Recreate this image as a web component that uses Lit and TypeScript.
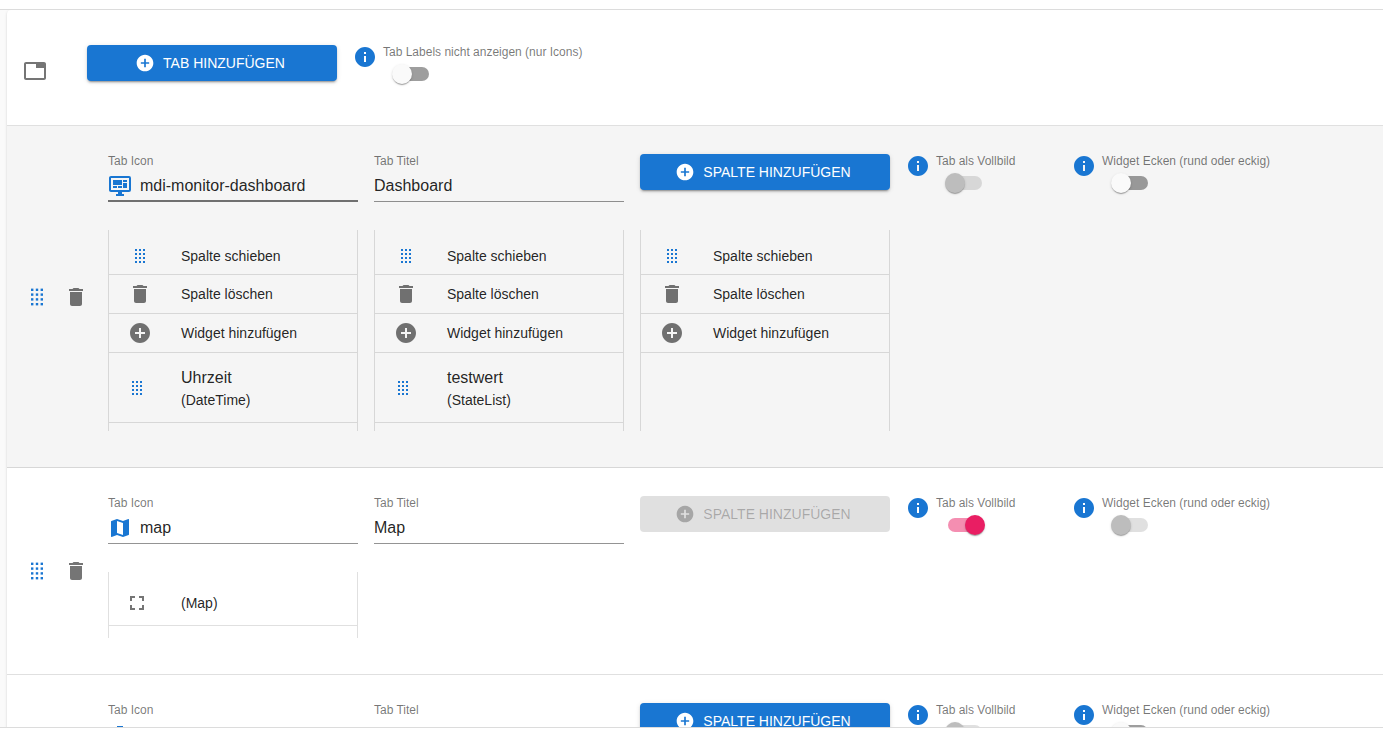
import { LitElement, html, svg, css, nothing } from "lit";
import { customElement, property } from "lit/decorators.js";
import { classMap } from "lit/directives/class-map.js";

const dots = [3.6, 8.4, 13.2, 18].flatMap((y) => [6, 10.8, 15.6].map((x) => ({ x, y })));

const paths: Record<string, string> = {
  tab: "M21 3H3c-1.1 0-2 .9-2 2v14c0 1.1.9 2 2 2h18c1.1 0 2-.9 2-2V5c0-1.1-.9-2-2-2zm0 16H3V5h10v4h8v10z",
  add: "M12 2C6.48 2 2 6.48 2 12s4.48 10 10 10 10-4.48 10-10S17.52 2 12 2zm5 11h-4v4h-2v-4H7v-2h4V7h2v4h4v2z",
  info: "M12 2C6.48 2 2 6.48 2 12s4.48 10 10 10 10-4.48 10-10S17.52 2 12 2zm1 15h-2v-6h2v6zm0-8h-2V7h2v2z",
  trash: "M6 19c0 1.1.9 2 2 2h8c1.1 0 2-.9 2-2V7H6v12zM19 4h-3.5l-1-1h-5l-1 1H5v2h14V4z",
  fullscreen: "M7 14H5v5h5v-2H7v-3zm-2-4h2V7h3V5H5v5zm12 7h-3v2h5v-5h-2v3zM14 5v2h3v3h2V5h-5z",
  monitor:
    "M21 16V4H3v12h18M21 2a2 2 0 0 1 2 2v12a2 2 0 0 1-2 2h-7v2h2v2H8v-2h2v-2H3c-1.11 0-2-.9-2-2V4c0-1.11.89-2 2-2h18M5 6h9v5H5V6m10 0h4v2h-4V6m4 3v5h-4V9h4M5 12h4v2H5v-2m5 0h4v2h-4v-2z",
  map: "M20.5 3l-.16.03L15 5.1 9 3 3.36 4.9c-.21.07-.36.25-.36.48V20.5c0 .28.22.5.5.5l.16-.03L9 18.9l6 2.1 5.64-1.9c.21-.07.36-.25.36-.48V3.5c0-.28-.22-.5-.5-.5zM15 19l-6-2.11V5l6 2.11V19z",
  box: "M9 3h6v3h5v15H4V6h5z",
};

const icon = (name: string, size = 24) => html`<svg
  width=${size}
  height=${size}
  viewBox="0 0 24 24"
  fill="currentColor"
  aria-hidden="true"
>
  ${name === "drag"
    ? dots.map((d) => svg`<rect x=${d.x} y=${d.y} width="2.4" height="2.4" />`)
    : svg`<path d=${paths[name]} />`}
</svg>`;

const base = css`
  * {
    box-sizing: border-box;
  }
  svg {
    display: block;
    flex: none;
  }
  button,
  input {
    font: inherit;
    color: inherit;
    margin: 0;
    padding: 0;
    border: 0;
    background: none;
  }
`;

@customElement("add-button")
export class AddButton extends LitElement {
  @property() label = "";
  @property({ type: Boolean }) disabled = false;

  static styles = [
    base,
    css`
      :host {
        display: block;
      }
      .button {
        display: flex;
        align-items: center;
        justify-content: center;
        gap: 8px;
        width: 100%;
        height: 36px;
        padding: 0 20px 0 16px;
        border-radius: 4px;
        background: #1976d2;
        color: #fff;
        font-size: 14px;
        line-height: 24px;
        text-transform: uppercase;
        cursor: pointer;
        box-shadow: 0 3px 1px -2px rgba(0, 0, 0, 0.2), 0 2px 2px rgba(0, 0, 0, 0.14),
          0 1px 5px rgba(0, 0, 0, 0.12);
      }
      .button:disabled {
        background: rgba(0, 0, 0, 0.12);
        color: rgba(0, 0, 0, 0.26);
        box-shadow: none;
        cursor: default;
      }
    `,
  ];

  render() {
    return html`<button class="button" ?disabled=${this.disabled}>
      ${icon("add", 20)}<span>${this.label}</span>
    </button>`;
  }
}

@customElement("info-switch")
export class InfoSwitch extends LitElement {
  @property() label = "";
  @property({ type: Boolean }) checked = false;
  @property({ type: Boolean }) disabled = false;

  static styles = [
    base,
    css`
      :host {
        display: flex;
        gap: 6px;
        white-space: nowrap;
      }
      .info {
        color: #1976d2;
      }
      .label {
        display: block;
        font-size: 12px;
        line-height: 14px;
        color: rgba(0, 0, 0, 0.54);
      }
      .switch {
        appearance: none;
        display: grid;
        align-items: center;
        width: 58px;
        height: 30px;
        padding: 0 9px;
        cursor: pointer;
      }
      .switch::before,
      .switch::after {
        content: "";
        grid-area: 1 / 1;
      }
      .switch::before {
        width: 34px;
        height: 14px;
        margin-left: 3px;
        border-radius: 7px;
        background: #000;
        opacity: 0.38;
      }
      .switch::after {
        width: 20px;
        height: 20px;
        border-radius: 50%;
        background: #fafafa;
        z-index: 1;
        box-shadow: 0 2px 1px -1px rgba(0, 0, 0, 0.2), 0 1px 1px rgba(0, 0, 0, 0.14),
          0 1px 3px rgba(0, 0, 0, 0.12);
      }
      .switch:checked::before {
        background: #e91e63;
        opacity: 0.5;
      }
      .switch:checked::after {
        background: #e91e63;
        justify-self: end;
      }
      .switch:disabled {
        cursor: default;
      }
      .switch:disabled::before {
        opacity: 0.12;
      }
      .switch:disabled::after {
        background: #bdbdbd;
      }
    `,
  ];

  render() {
    return html`<span class="info">${icon("info")}</span>
      <div>
        <label class="label" for="toggle">${this.label}</label>
        <input
          class="switch"
          id="toggle"
          type="checkbox"
          .checked=${this.checked}
          ?disabled=${this.disabled}
        />
      </div>`;
  }
}

@customElement("text-field")
export class TextField extends LitElement {
  @property() label = "";
  @property() value = "";
  @property() icon = "";
  @property({ type: Boolean }) active = false;

  static styles = [
    base,
    css`
      :host {
        display: block;
      }
      .label {
        display: block;
        height: 16px;
        font-size: 12px;
        line-height: 14px;
        color: rgba(0, 0, 0, 0.54);
      }
      .control {
        display: flex;
        align-items: flex-start;
        gap: 8px;
        height: 32px;
        border-bottom: 1px solid rgba(0, 0, 0, 0.42);
      }
      .active {
        border-bottom: 2px solid rgba(0, 0, 0, 0.54);
      }
      .icon {
        padding-top: 4px;
        color: #1976d2;
      }
      .input {
        flex: 1;
        min-width: 0;
        height: 30px;
        padding-top: 2px;
        font-size: 16px;
        outline: none;
      }
    `,
  ];

  render() {
    return html`<label class="label" for="field">${this.label}</label>
      <div class=${classMap({ control: true, active: this.active })}>
        ${this.icon ? html`<span class="icon">${icon(this.icon)}</span>` : nothing}
        <input class="input" id="field" type="text" .value=${this.value} />
      </div>`;
  }
}

interface Widget {
  icon: string;
  title?: string;
  type: string;
}

@customElement("widget-column")
export class WidgetColumn extends LitElement {
  @property({ attribute: false }) widgets: Widget[] = [];
  @property({ type: Boolean }) actions = false;

  static styles = [
    base,
    css`
      :host {
        display: block;
      }
      .list {
        height: 100%;
        min-height: 66px;
        margin: 0;
        padding: 8px 0;
        list-style: none;
        border: solid rgba(0, 0, 0, 0.12);
        border-width: 0 1px;
        font-size: 14px;
        line-height: 20px;
      }
      .item {
        display: flex;
        align-items: center;
        min-height: 39px;
        padding: 0 16px;
        border-bottom: 1px solid rgba(0, 0, 0, 0.12);
      }
      .first {
        min-height: 37px;
      }
      .widget {
        min-height: 46px;
      }
      .titled {
        min-height: 70px;
      }
      .lead {
        flex: none;
        display: flex;
        width: 56px;
        color: rgba(0, 0, 0, 0.54);
      }
      .lead.drag {
        padding: 0 2px;
        color: #1976d2;
        cursor: grab;
      }
      .action {
        padding: 0 3px;
      }
      .action.drag {
        padding: 0 5px;
      }
      .title {
        font-size: 16px;
        line-height: 24px;
      }
      .type {
        font-size: 14px;
      }
    `,
  ];

  render() {
    return html`<ul class="list">
      ${this.actions
        ? html`<li class="item first">
              <span class="lead drag action">${icon("drag", 20)}</span>Spalte schieben
            </li>
            <li class="item">
              <span class="lead action"
                ><button aria-label="Spalte löschen">${icon("trash")}</button></span
              >Spalte löschen
            </li>
            <li class="item">
              <span class="lead action"
                ><button aria-label="Widget hinzufügen">${icon("add")}</button></span
              >Widget hinzufügen
            </li>`
        : nothing}
      ${this.widgets.map(
        (w) => html`<li class=${classMap({ item: true, widget: true, titled: !!w.title })}>
          <span class=${classMap({ lead: true, drag: w.icon === "drag" })}
            >${icon(w.icon, w.icon === "drag" ? 20 : 24)}</span
          >
          <div>
            ${w.title ? html`<div class="title">${w.title}</div>` : nothing}
            <div class="type">${w.type}</div>
          </div>
        </li>`
      )}
    </ul>`;
  }
}

interface Tab {
  icon: string;
  iconName: string;
  title: string;
  hovered?: boolean;
  full?: boolean;
  fullDisabled?: boolean;
  columns: Widget[][];
}

const tabs: Tab[] = [
  {
    icon: "monitor",
    iconName: "mdi-monitor-dashboard",
    title: "Dashboard",
    hovered: true,
    fullDisabled: true,
    columns: [
      [{ icon: "drag", title: "Uhrzeit", type: "(DateTime)" }],
      [{ icon: "drag", title: "testwert", type: "(StateList)" }],
      [],
    ],
  },
  {
    icon: "map",
    iconName: "map",
    title: "Map",
    full: true,
    columns: [[{ icon: "fullscreen", type: "(Map)" }]],
  },
  { icon: "box", iconName: "", title: "", fullDisabled: true, columns: [[]] },
];

@customElement("app-root")
export class AppRoot extends LitElement {
  static styles = [
    base,
    css`
      :host {
        display: flex;
        flex-direction: column;
        height: 100vh;
        background: #fff;
        color: rgba(0, 0, 0, 0.87);
        font-family: "Liberation Sans", Arial, sans-serif;
        font-size: 14px;
      }
      .top {
        flex: none;
        height: 10px;
        border-bottom: 1px solid #dcdcdc;
      }
      .bottom {
        flex: none;
        height: 12px;
        border-top: 1px solid #dcdcdc;
      }
      .main {
        flex: 1;
        min-height: 0;
        overflow: hidden;
        padding-left: 7px;
        background: #fafafa;
      }
      .panel {
        min-height: 100%;
        background: #fff;
        border-top-left-radius: 4px;
        box-shadow: 0 2px 1px -1px rgba(0, 0, 0, 0.2), 0 1px 1px rgba(0, 0, 0, 0.14),
          0 1px 3px rgba(0, 0, 0, 0.12);
      }
      .row {
        display: flex;
        border-bottom: 1px solid rgba(0, 0, 0, 0.12);
      }
      .head {
        padding: 35px 0 36px;
      }
      .tab {
        padding: 28px 0 36px;
      }
      .hovered {
        background: #f5f5f5;
      }
      .lead {
        flex: none;
        display: flex;
        align-items: center;
        padding-top: 8px;
        color: rgba(0, 0, 0, 0.54);
      }
      .head .lead {
        width: 80px;
        padding-left: 16px;
      }
      .tab .lead {
        width: 101px;
        gap: 15px;
        padding-left: 18px;
      }
      .drag {
        color: #1976d2;
        cursor: grab;
      }
      .grid {
        flex: 1;
        display: grid;
        grid-template-columns: repeat(3, 250px) 150px 1fr;
        gap: 28px 16px;
      }
      .first-col {
        grid-column-start: 1;
      }
    `,
  ];

  render() {
    return html`<div class="top"></div>
      <main class="main">
        <div class="panel">
          <section class="row head">
            <div class="lead">${icon("tab")}</div>
            <div class="grid">
              <add-button label="Tab hinzufügen"></add-button>
              <info-switch label="Tab Labels nicht anzeigen (nur Icons)"></info-switch>
            </div>
          </section>
          ${tabs.map((t) => this.renderTab(t))}
        </div>
      </main>
      <div class="bottom"></div>`;
  }

  private renderTab(t: Tab) {
    return html`<section class=${classMap({ row: true, tab: true, hovered: !!t.hovered })}>
      <div class="lead">
        <span class="drag">${icon("drag")}</span>
        <button aria-label="Tab löschen">${icon("trash")}</button>
      </div>
      <div class="grid">
        <text-field
          label="Tab Icon"
          .value=${t.iconName}
          .icon=${t.icon}
          ?active=${t.hovered}
        ></text-field>
        <text-field label="Tab Titel" .value=${t.title}></text-field>
        <add-button label="Spalte hinzufügen" ?disabled=${t.full}></add-button>
        <info-switch
          label="Tab als Vollbild"
          ?checked=${t.full}
          ?disabled=${t.fullDisabled}
        ></info-switch>
        <info-switch label="Widget Ecken (rund oder eckig)" ?disabled=${t.full}></info-switch>
        ${t.columns.map(
          (c, i) => html`<widget-column
            class=${classMap({ "first-col": i === 0 })}
            .widgets=${c}
            ?actions=${!t.full}
          ></widget-column>`
        )}
      </div>
    </section>`;
  }
}
